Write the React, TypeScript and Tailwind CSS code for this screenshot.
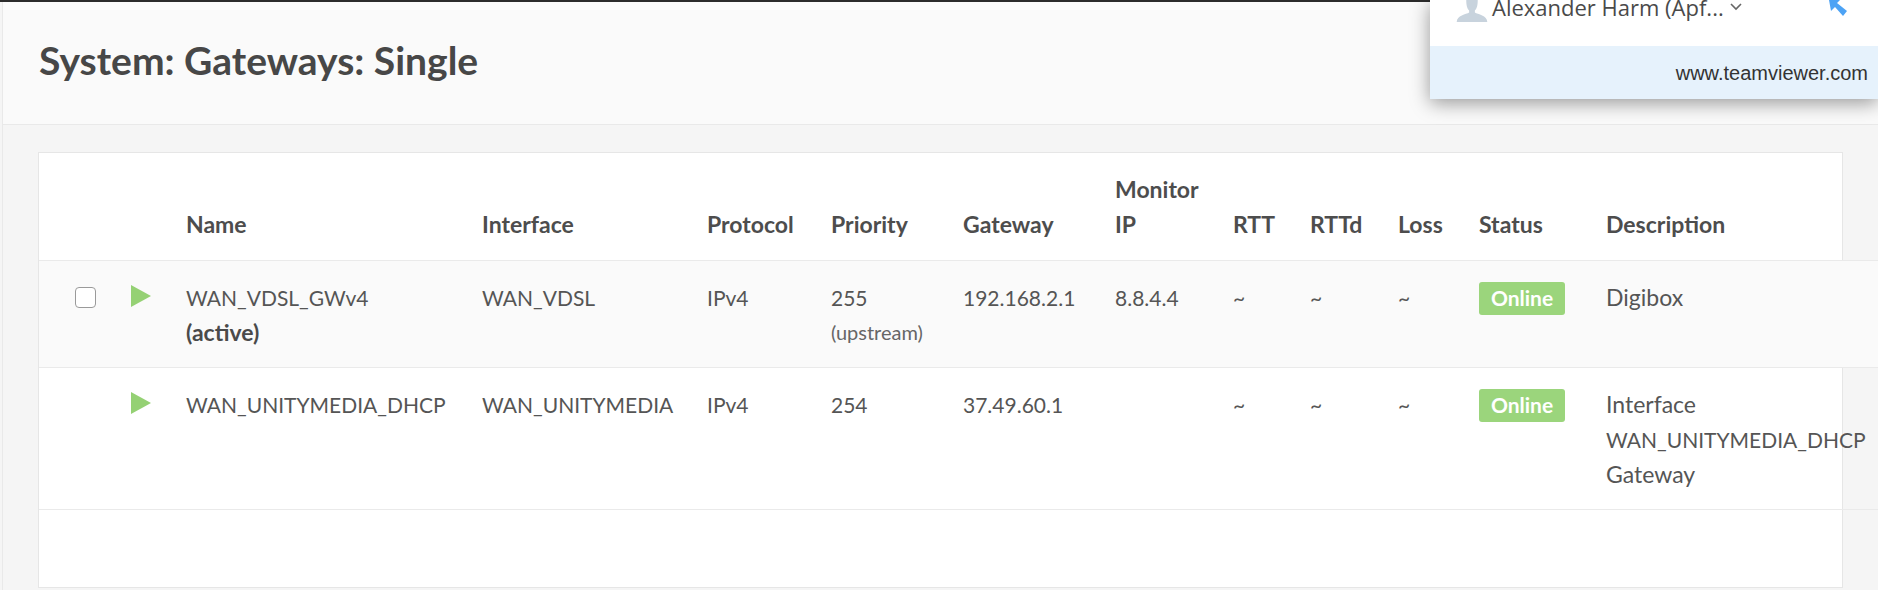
const th = "align-bottom pb-[18px] pl-0 pr-2 text-left text-[23px] font-bold text-[#4d4d4d] leading-[35px]";
const td = "align-top pt-[19px] pb-[17px] pl-0 pr-0 whitespace-nowrap leading-[35px] text-[21px]";
const tdLower = "align-top pt-[19px] pb-[17px] pl-0 pr-0 whitespace-nowrap leading-[35px] text-[23px]";

function Arrow() {
  return (
    <svg width="20" height="22" viewBox="0 0 20 22" className="block mt-[5px]">
      <polygon points="0,0 20,11 0,22" fill="#95d174" />
    </svg>
  );
}

function Badge() {
  return (
    <span className="mt-[2px] flex h-[33px] w-[86px] items-center justify-center rounded-[3px] bg-[#9bd57c] pb-[2px] text-[21px] font-bold text-white">
      Online
    </span>
  );
}

export default function App() {
  return (
    <div className="relative h-[590px] w-[1878px] overflow-hidden bg-[#f5f5f5] font-['Lato','Liberation_Sans',sans-serif] text-[#555]">
      <div className="h-[2px] bg-[#2b2b2b]" />
      <header className="ml-[2px] flex h-[123px] items-center border-b border-l border-[#e9e9e9] bg-[#fafafa] pb-[6px] pl-[36px]">
        <h1 className="text-[39px] font-bold text-[#474747]">System: Gateways: Single</h1>
      </header>
      <div className="ml-[2px] h-[465px] border-l border-[#e9e9e9] pt-[27px] pl-[35px]">
        <div className="h-[436px] w-[1805px] border border-[#e6e6e6] bg-white">
          <table className="w-[1887px] table-fixed border-collapse">
            <colgroup>
              <col className="w-[92px]" />
              <col className="w-[55px]" />
              <col className="w-[296px]" />
              <col className="w-[225px]" />
              <col className="w-[124px]" />
              <col className="w-[132px]" />
              <col className="w-[152px]" />
              <col className="w-[118px]" />
              <col className="w-[77px]" />
              <col className="w-[88px]" />
              <col className="w-[81px]" />
              <col className="w-[127px]" />
              <col className="w-[320px]" />
            </colgroup>
            <thead>
              <tr className="h-[107px] border-b border-[#eaeaea]">
                <th className={th} />
                <th className={th} />
                <th className={th}>Name</th>
                <th className={th}>Interface</th>
                <th className={th}>Protocol</th>
                <th className={th}>Priority</th>
                <th className={th}>Gateway</th>
                <th className={th}>Monitor<br />IP</th>
                <th className={th}>RTT</th>
                <th className={th}>RTTd</th>
                <th className={th}>Loss</th>
                <th className={th}>Status</th>
                <th className={th}>Description</th>
              </tr>
            </thead>
            <tbody>
              <tr className="border-b border-[#eaeaea] bg-[#fafafa]">
                <td className={td}>
                  <span className="ml-[36px] mt-[7px] block h-[21px] w-[21px] rounded-[4px] border border-[#9a9a9a] bg-white" />
                </td>
                <td className={td}><Arrow /></td>
                <td className={td}>WAN_VDSL_GWv4<br /><b className="text-[23px] text-[#4a4a4a]">(active)</b></td>
                <td className={td}>WAN_VDSL</td>
                <td className={td}>IPv4</td>
                <td className={td}>255<br /><span className="block text-[20px] text-[#666]">(upstream)</span></td>
                <td className={td}>192.168.2.1</td>
                <td className={td}>8.8.4.4</td>
                <td className={td}>~</td>
                <td className={td}>~</td>
                <td className={td}>~</td>
                <td className={td}><Badge /></td>
                <td className={tdLower}>Digibox</td>
              </tr>
              <tr className="border-b border-[#eaeaea]">
                <td className={td} />
                <td className={td}><Arrow /></td>
                <td className={td}>WAN_UNITYMEDIA_DHCP</td>
                <td className={td}>WAN_UNITYMEDIA</td>
                <td className={td}>IPv4</td>
                <td className={td}>254</td>
                <td className={td}>37.49.60.1</td>
                <td className={td} />
                <td className={td}>~</td>
                <td className={td}>~</td>
                <td className={td}>~</td>
                <td className={td}><Badge /></td>
                <td className={tdLower}>Interface<br /><span className="text-[21px]">WAN_UNITYMEDIA_DHCP</span><br />Gateway</td>
              </tr>
            </tbody>
          </table>
        </div>
      </div>

      <aside className="absolute top-0 right-0 h-[99px] w-[448px] bg-white shadow-[0_4px_18px_rgba(0,0,0,0.4)]">
        <div className="flex h-[46px] items-start">
          <svg width="32" height="22" viewBox="0 0 32 23" className="ml-[26px]">
            <path d="M10 0h12c0 6-1 9-3 11v2c3 2 13 3 13 10H0c0-7 10-8 13-10v-2c-2-2-3-5-3-11z" fill="#c8d3dd" />
          </svg>
          <span className="ml-[4px] font-['Open_Sans',sans-serif] text-[22px] leading-[14px] text-[#4a4a4a]">Alexander Harm (Apf...</span>
          <svg width="12" height="8" viewBox="0 0 12 8" className="ml-[6px] mt-[3px]">
            <path d="M1 1l5 5 5-5" fill="none" stroke="#666" strokeWidth="1.6" />
          </svg>
          <svg width="20" height="16" viewBox="0 0 20 16" className="ml-auto mr-[30px]">
            <path d="M1 0h11l-3 3 10 8-4 5-8-9-4 4z" fill="#4da3f5" />
          </svg>
        </div>
        <div className="flex h-[53px] items-center justify-end bg-[#e6f2fc] pr-[10px] font-['Liberation_Sans',sans-serif] text-[20px] text-[#333]">
          www.teamviewer.com
        </div>
      </aside>
    </div>
  );
}
